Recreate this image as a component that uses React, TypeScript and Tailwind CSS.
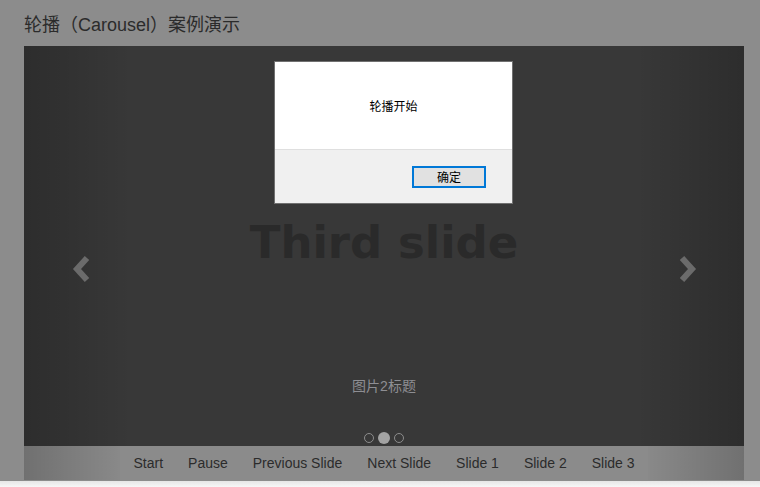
import React from "react";

const buttons = ["Start", "Pause", "Previous Slide", "Next Slide", "Slide 1", "Slide 2", "Slide 3"];

function Chevron({ dir }: { dir: "left" | "right" }) {
    const d = dir === "left" ? "M15 3 L5 14 L15 25" : "M3 3 L13 14 L3 25";
    return (
        <svg width="18" height="28" viewBox="0 0 18 28">
            <path d={d} fill="none" stroke="#6b6b6b" strokeWidth="6" strokeLinejoin="miter" strokeLinecap="butt" />
        </svg>
    );
}

export default function App() {
    return (
        <div className="relative h-[487px] w-[760px] overflow-hidden bg-[#8c8c8c] font-['Liberation_Sans','Noto_Sans_CJK_SC',sans-serif]">
            <div className="h-[481px] pl-6">
                <h1 className="h-[46px] pt-[13px] text-[18px] leading-[24px] text-[#2b2b2b]">轮播（Carousel）案例演示</h1>

                <div className="relative w-[720px]">
                    <div className="relative flex h-[400px] flex-col items-center bg-[#383838]">
                        <div className="mt-[170px] font-['DejaVu_Sans',sans-serif] text-[45px] font-bold leading-[54px] text-[#2a2a2a]">Third slide</div>
                        <div className="mt-[106px] text-[14px] leading-[20px] text-[#8e8e93]">图片2标题</div>
                        <div className="mt-[36px] flex items-center gap-[4px]">
                            <span className="h-[10px] w-[10px] rounded-full border border-[#8c8c8c]" />
                            <span className="h-[12px] w-[12px] rounded-full bg-[#a3a3a3]" />
                            <span className="h-[10px] w-[10px] rounded-full border border-[#8c8c8c]" />
                        </div>
                    </div>
                    <div className="flex h-[34px] justify-center">
                        <div className="relative z-10 flex bg-[#8b8b8b] px-[1px]">
                            {buttons.map((b) => (
                                <button key={b} className="px-[12.5px] text-[14px] leading-[34px] text-[#2b2b2b]">
                                    {b}
                                </button>
                            ))}
                        </div>
                    </div>

                    <div className="absolute inset-y-0 left-0 flex w-[108px] items-center bg-gradient-to-r from-black/20 to-transparent pl-[48px] pt-[12px]">
                        <Chevron dir="left" />
                    </div>
                    <div className="absolute inset-y-0 right-0 flex w-[108px] items-center justify-end bg-gradient-to-l from-black/20 to-transparent pr-[47px] pt-[12px]">
                        <Chevron dir="right" />
                    </div>
                </div>
            </div>
            <div className="h-[6px] bg-gradient-to-b from-[#e6e6e6] to-[#f7f7f7]" />

            <div className="absolute left-[274px] top-[61px] w-[239px] border border-[#707070] bg-white font-['Noto_Sans_CJK_SC',sans-serif]">
                <div className="flex h-[87px] items-center justify-center text-[12px] text-black">轮播开始</div>
                <div className="flex h-[54px] items-center justify-end border-t border-[#dfdfdf] bg-[#f0f0f0] pr-[26px]">
                    <button className="h-[22px] w-[74px] border-2 border-[#0078d7] bg-[#e1e1e1] text-[12px] leading-[18px] text-black">确定</button>
                </div>
            </div>
        </div>
    );
}
